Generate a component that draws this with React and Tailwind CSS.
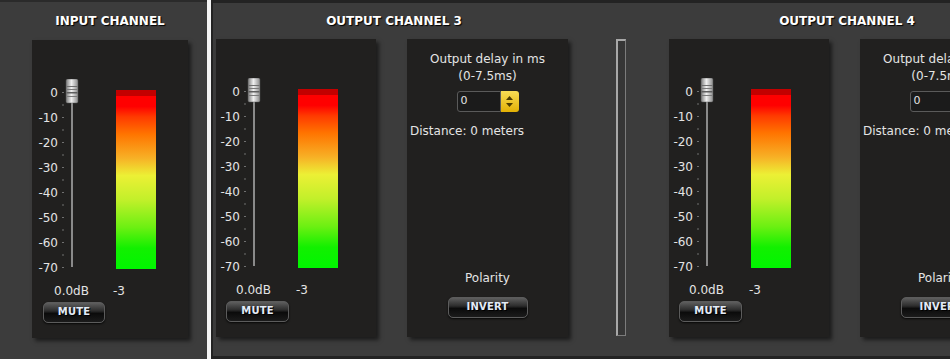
import React from "react";

const font = { fontFamily: '"DejaVu Sans", Verdana, sans-serif' };
const labels = ["0", "-10", "-20", "-30", "-40", "-50", "-60", "-70"];

function ScaleSlider() {
  const ticks = [];
  for (let i = 0; i < 15; i++) {
    ticks.push(<rect key={i} x="2" y={13 + i * 12.5} width="2" height="1" fill="#707070" />);
  }
  return (
    <svg width="20" height="200" viewBox="0 0 20 200">
      <defs>
        <linearGradient id="knob" x1="0" x2="1" y1="0" y2="0">
          <stop offset="0" stopColor="#7a7a7a" />
          <stop offset="0.45" stopColor="#f0f0f0" />
          <stop offset="1" stopColor="#8c8c8c" />
        </linearGradient>
      </defs>
      {ticks}
      <rect x="11" y="22" width="2" height="166" fill="#8a8a8a" />
      <rect x="6" y="0" width="12" height="24" rx="1.5" fill="url(#knob)" stroke="#555" strokeWidth="0.5" />
      <rect x="6.5" y="7" width="11" height="1" fill="#6e6e6e" />
      <rect x="6.5" y="10" width="11" height="1" fill="#7a7a7a" />
      <rect x="6.5" y="13" width="11" height="1.5" fill="#5e5e5e" />
      <rect x="6.5" y="17" width="11" height="1" fill="#7a7a7a" />
    </svg>
  );
}

function GlossButton({ label, width }) {
  return (
    <div
      className={`${width} h-[21px] rounded-[5px] border border-[#5c5c5c] flex items-center justify-center pb-[2px] bg-[linear-gradient(to_bottom,#5e5e5e_0%,#2c2c2c_42%,#0b0b0b_55%,#1b1b1b_100%)] shadow-[0_1px_2px_rgba(0,0,0,0.8)]`}
    >
      <span className="text-[10px] font-bold text-[#e3ebf7] [text-shadow:1px_1px_0_#000] tracking-[0.2px]">{label}</span>
    </div>
  );
}

function MeterCard({ width, labelW, dbMl, dbW, btnMl, btnW }) {
  return (
    <div className={`${width} h-[298px] bg-[#21201f] shadow-[3px_3px_4px_rgba(0,0,0,0.55)] flex flex-col text-[#e4e4e4] text-[12px]`}>
      <div className="flex items-start pt-[39px] h-[239px]">
        <div className={`${labelW} flex flex-col text-right mt-[2px]`}>
          {labels.map((l) => (
            <div key={l} className="h-[25px] leading-[25px]">{l}</div>
          ))}
        </div>
        <div className="ml-[2px]">
          <ScaleSlider />
        </div>
        <div className="ml-[36px] mt-[11px] w-[40px] h-[179px] flex flex-col">
          <div className="h-[6px] bg-[#c30000]" />
          <div className="flex-1 bg-[linear-gradient(to_bottom,#ff0000_0%,#ff0000_6%,#ff3a00_12%,#ff7400_22%,#f7b126_36%,#ecf035_46%,#c2f02a_60%,#6cf012_76%,#12f000_88%,#00f600_100%)]" />
        </div>
      </div>
      <div className="flex h-[22px] items-center mt-[1px]">
        <span className={`${dbMl} ${dbW}`}>0.0dB</span>
        <span>-3</span>
      </div>
      <div className={`${btnMl}`}>
        <GlossButton label="MUTE" width={btnW} />
      </div>
    </div>
  );
}

function DelayCard() {
  return (
    <div className="w-[161px] h-[298px] bg-[#21201f] shadow-[3px_3px_4px_rgba(0,0,0,0.55)] flex flex-col text-[#e4e4e4] text-[12px] pt-[12px] pb-[20px] whitespace-nowrap">
      <div className="text-center leading-[17px]">Output delay in ms</div>
      <div className="text-center leading-[17px]">(0-7.5ms)</div>
      <div className="flex justify-center mt-[6px]">
        <div className="w-[44px] h-[21px] bg-[#1b1b1b] border border-[#5a5a5a] rounded-l-[3px] flex items-center pl-[3px] text-[11px]">0</div>
        <div className="w-[18px] h-[21px] rounded-r-[3px] bg-[linear-gradient(to_bottom,#f8dc55,#e3b105)] flex flex-col items-center justify-center gap-[3px]">
          <svg width="7" height="4" viewBox="0 0 7 4"><path d="M3.5 0 L7 4 L0 4 Z" fill="#4c3b00" /></svg>
          <svg width="7" height="4" viewBox="0 0 7 4"><path d="M0 0 L7 0 L3.5 4 Z" fill="#4c3b00" /></svg>
        </div>
      </div>
      <div className="mt-[11px] pl-[3px] leading-[17px]">Distance: 0 meters</div>
      <div className="mt-auto text-center leading-[17px]">Polarity</div>
      <div className="flex justify-center mt-[10px] mb-[-1px]">
        <GlossButton label="INVERT" width="w-[80px]" />
      </div>
    </div>
  );
}

function OutputBlock({ n }) {
  return (
    <div className="flex flex-col w-[352px] shrink-0">
      <div className="h-[36px] flex items-center justify-center pl-[4px]">
        <span className="text-[12px] font-bold text-white [text-shadow:1px_1px_1px_#000] whitespace-nowrap">OUTPUT CHANNEL {n}</span>
      </div>
      <div className="flex gap-[31px]">
        <MeterCard width="w-[160px]" labelW="w-[24px]" dbMl="ml-[20px]" dbW="w-[60px]" btnMl="ml-[10px]" btnW="w-[63px]" />
        <DelayCard />
      </div>
    </div>
  );
}

export default function App() {
  return (
    <div className="w-[950px] h-[359px] flex overflow-hidden bg-[#f4f4f4]" style={font}>
      <div className="w-[207px] shrink-0 h-full bg-[#3c3c3c] border-t-2 border-[#2a2a2a] flex flex-col">
        <div className="h-[38px] flex items-center justify-center pl-[13px]">
          <span className="text-[12px] font-bold text-white [text-shadow:1px_1px_1px_#000]">INPUT CHANNEL</span>
        </div>
        <div className="ml-[32px]">
          <MeterCard width="w-[156px]" labelW="w-[26px]" dbMl="ml-[22px]" dbW="w-[59px]" btnMl="ml-[11px]" btnW="w-[62px]" />
        </div>
      </div>
      <div className="ml-[4px] flex-1 h-full bg-[#3c3c3c] border-l-2 border-t-[3px] border-b-[3px] border-[#232323] pl-[3px] flex items-start overflow-hidden">
        <OutputBlock n={3} />
        <div className="ml-[48px] mt-[36px] w-[10px] h-[297px] shrink-0 border-l-2 border-t-2 border-[#a8a8a8] border-r border-r-[#7c7c7c] border-b border-b-[#7c7c7c] bg-[#363636]" />
        <div className="ml-[43px]">
          <OutputBlock n={4} />
        </div>
      </div>
    </div>
  );
}
